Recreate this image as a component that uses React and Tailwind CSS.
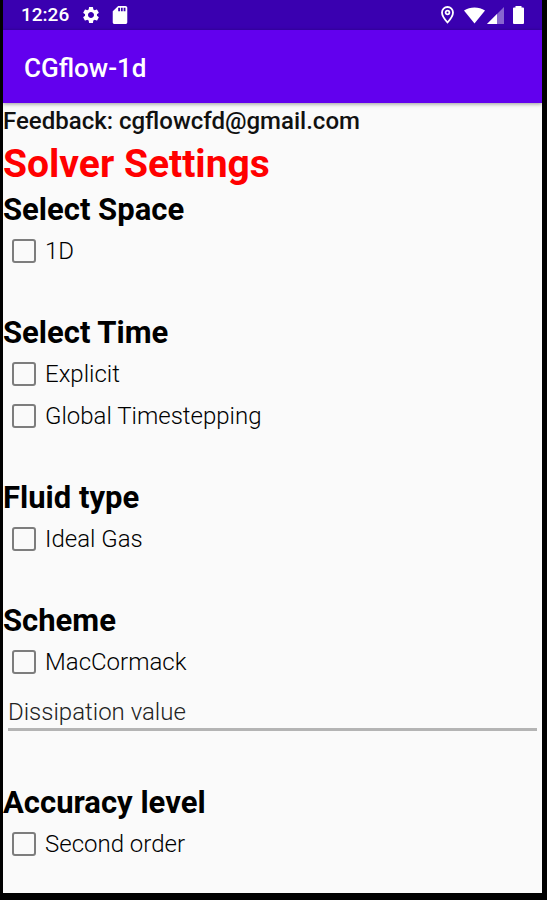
import React, { useState } from 'react';
import { MdSettings, MdSdCard } from 'react-icons/md';

const sections = [
    { title: 'Select Space', options: ['1D'] },
    { title: 'Select Time', options: ['Explicit', 'Global Timestepping'] },
    { title: 'Fluid type', options: ['Ideal Gas'] },
    { title: 'Scheme', options: ['MacCormack'], field: 'Dissipation value' },
    { title: 'Accuracy level', options: ['Second order'] },
];

const StatusBar = () => (
    <div className="h-[30px] flex items-center justify-between bg-[#3a00b0] px-[18px] text-white">
        <div className="flex items-center">
            <span className="text-[19px] font-medium">12:26</span>
            <MdSettings className="ml-3 size-5" />
            <MdSdCard className="ml-[9px] size-5" viewBox="1 1 22 22" />
        </div>
        <div className="flex items-center">
            <svg className="w-[13px] h-[18px]" viewBox="0 0 13 18" fill="none" stroke="currentColor">
                <path d="M6.5 1C3.4 1 1 3.4 1 6.5 1 10.5 6.5 16.5 6.5 16.5S12 10.5 12 6.5C12 3.4 9.6 1 6.5 1Z" strokeWidth="1.8" />
                <circle cx="6.5" cy="6.5" r="1.9" strokeWidth="1.8" />
            </svg>
            <svg className="ml-[10px] w-[21px] h-[17px]" viewBox="0 0 21 17" fill="currentColor">
                <path d="M0 3.5C6 -0.6 15 -0.6 21 3.5L10.5 16.5Z" />
            </svg>
            <svg className="ml-[2px] w-[17px] h-[17px]" viewBox="0 0 17 17" fill="currentColor">
                <path d="M17 0V17H0Z" opacity="0.4" />
                <path d="M10 7V17H0Z" />
            </svg>
            <svg className="ml-[9px] w-[11px] h-[18px]" viewBox="0 0 11 18" fill="currentColor">
                <path d="M2.5 0H8.5V1.5H10Q11 1.5 11 2.5V17Q11 18 10 18H1Q0 18 0 17V2.5Q0 1.5 1 1.5H2.5Z" />
            </svg>
        </div>
    </div>
);

const Option = ({ label, checked, onChange }) => (
    <label className="h-[42px] flex items-center gap-[9px] pl-[9px] text-2xl font-light text-black">
        <input
            type="checkbox"
            checked={checked}
            onChange={onChange}
            className="appearance-none size-6 shrink-0 rounded-[3px] border-2 border-[#7d7d7d] checked:border-[#03dac5] checked:bg-[#03dac5]"
        />
        {label}
    </label>
);

const App = () => {
    const [selected, setSelected] = useState({});
    const [dissipation, setDissipation] = useState('');

    const toggle = (option) => {
        setSelected((prev) => ({ ...prev, [option]: !prev[option] }));
    };

    return (
        <div className="min-h-screen flex flex-col bg-black pl-[3px] pr-[5px] pb-[7px] font-[Roboto,sans-serif]">
            <StatusBar />
            <header className="h-[73px] flex items-center bg-[#6200ee] pl-[21px] pt-1 shadow-[0_1px_4px_rgba(0,0,0,0.4)] z-10">
                <h1 className="text-[26px] font-medium text-white">CGflow-1d</h1>
            </header>
            <main className="grow bg-[#fafafa] pb-7">
                <p className="h-9 flex items-center text-2xl font-medium text-[#111111]">Feedback: cgflowcfd@gmail.com</p>
                <h2 className="h-[51px] flex items-center text-[39px] font-bold text-[#ff0000]">Solver Settings</h2>
                <div className="flex flex-col gap-[41px]">
                    {sections.map((section) => (
                        <section key={section.title}>
                            <h3 className="h-10 flex items-center text-[31px] font-bold text-black">{section.title}</h3>
                            {section.options.map((option) => (
                                <Option
                                    key={option}
                                    label={option}
                                    checked={!!selected[option]}
                                    onChange={() => toggle(option)}
                                />
                            ))}
                            {section.field && (
                                <div className="h-[59px] pt-2 px-[5px]">
                                    <input
                                        type="text"
                                        aria-label={section.field}
                                        placeholder={section.field}
                                        value={dissipation}
                                        onChange={(e) => setDissipation(e.target.value)}
                                        className="w-full h-10 pt-1 border-b-3 border-[#b4b4b4] bg-transparent text-2xl font-light text-black placeholder:text-[#222222] outline-none"
                                    />
                                </div>
                            )}
                        </section>
                    ))}
                </div>
            </main>
        </div>
    );
};

export default App;
